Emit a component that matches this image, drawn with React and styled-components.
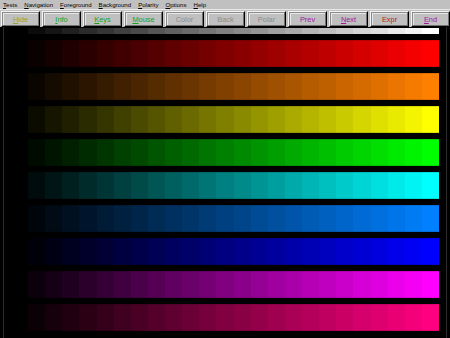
import React from "react";
import styled, { createGlobalStyle } from "styled-components";

const Global = createGlobalStyle`
  html, body { margin: 0; padding: 0; background: #000; }
  #root { width: 450px; height: 338px; }
`;

const Screen = styled.div`
  width: 450px;
  height: 338px;
  display: flex;
  flex-direction: column;
  background: #000;
  overflow: hidden;
  font-family: "Liberation Sans", Arial, sans-serif;
`;

const MenuBar = styled.div`
  height: 9px;
  background: #c0c0c0;
  border-bottom: 1px solid #e8e8e8;
  display: flex;
  align-items: center;
  gap: 7px;
  padding-left: 3px;
  font-size: 6.1px;
  color: #000;
`;

const MenuItem = styled.span`
  line-height: 9px;
  white-space: nowrap;
`;

const Mn = styled.span`
  text-decoration: underline;
`;

const Toolbar = styled.div`
  height: 17px;
  background: #c0c0c0;
  display: grid;
  grid-template-columns: repeat(11, 41px);
  padding-left: 1px;
  align-items: start;
`;

const Button = styled.div`
  box-sizing: border-box;
  height: 16px;
  margin-top: 1px;
  margin-right: 2px;
  border: 1px solid;
  border-color: #f4f4f4 #000000 #000000 #f4f4f4;
  box-shadow: inset -1px -1px 0 #707070, inset 1px 1px 0 #8a8a8a, inset 2px 2px 0 #e8e8e8;
  background: #c0c0c0;
  display: flex;
  align-items: center;
  justify-content: center;
  font-size: 7.4px;
  color: ${(p) => p.$color};
  white-space: nowrap;
`;

const Canvas = styled.div`
  flex: 1;
  margin: 0 3px;
  border-left: 1px solid #2c2c2c;
  border-right: 1px solid #2c2c2c;
  padding: 1px 7px 0 24px;
  display: flex;
  flex-direction: column;
`;

const GrayStrip = styled.div`
  height: 6px;
  display: flex;
  margin-bottom: 6px;
`;

const Bars = styled.div`
  display: flex;
  flex-direction: column;
  gap: 6px;
`;

const Bar = styled.div`
  height: 27px;
  display: flex;
`;

const Cell = styled.div`
  flex: 1;
  height: 100%;
  box-shadow: inset 0 1px 0 rgba(0, 0, 0, 0.12), inset 0 -1px 0 rgba(0, 0, 0, 0.12);
`;

const StripCell = styled.div`
  flex: 1;
  height: 100%;
`;

const STEPS = 24;
const levels = Array.from({ length: STEPS }, (_, i) => (i + 1) / STEPS);

const colors = [
  [255, 0, 0],
  [255, 128, 0],
  [255, 255, 0],
  [0, 255, 0],
  [0, 255, 255],
  [0, 128, 255],
  [0, 0, 255],
  [255, 0, 255],
  [255, 0, 128],
];

const rgb = (c, f) =>
  `rgb(${Math.round(c[0] * f)}, ${Math.round(c[1] * f)}, ${Math.round(c[2] * f)})`;

const menus = ["Tests", "Navigation", "Foreground", "Background", "Polarity", "Options", "Help"];

const buttons = [
  { label: "Hide", color: "#a0a028", u: true },
  { label: "Info", color: "#18a018", u: true },
  { label: "Keys", color: "#18a018", u: true },
  { label: "Mouse", color: "#18a018", u: true },
  { label: "Color", color: "#8c8c8c", u: false },
  { label: "Back", color: "#8c8c8c", u: false },
  { label: "Polar", color: "#8c8c8c", u: false },
  { label: "Prev", color: "#a018a0", u: false },
  { label: "Next", color: "#a018a0", u: true },
  { label: "Expr", color: "#c01818", u: false },
  { label: "End", color: "#a018a0", u: true },
];

export default function App() {
  return (
    <Screen>
      <Global />
      <MenuBar>
        {menus.map((m) => (
          <MenuItem key={m}>
            <Mn>{m[0]}</Mn>
            {m.slice(1)}
          </MenuItem>
        ))}
      </MenuBar>
      <Toolbar>
        {buttons.map((b) => (
          <Button key={b.label} $color={b.color}>
            {b.u ? (
              <>
                <Mn>{b.label[0]}</Mn>
                {b.label.slice(1)}
              </>
            ) : (
              b.label
            )}
          </Button>
        ))}
      </Toolbar>
      <Canvas>
        <GrayStrip>
          {levels.map((f, i) => (
            <StripCell key={i} style={{ background: rgb([255, 255, 255], f) }} />
          ))}
        </GrayStrip>
        <Bars>
          {colors.map((c, r) => (
            <Bar key={r}>
              {levels.map((f, i) => (
                <Cell key={i} style={{ background: rgb(c, f) }} />
              ))}
            </Bar>
          ))}
        </Bars>
      </Canvas>
    </Screen>
  );
}
